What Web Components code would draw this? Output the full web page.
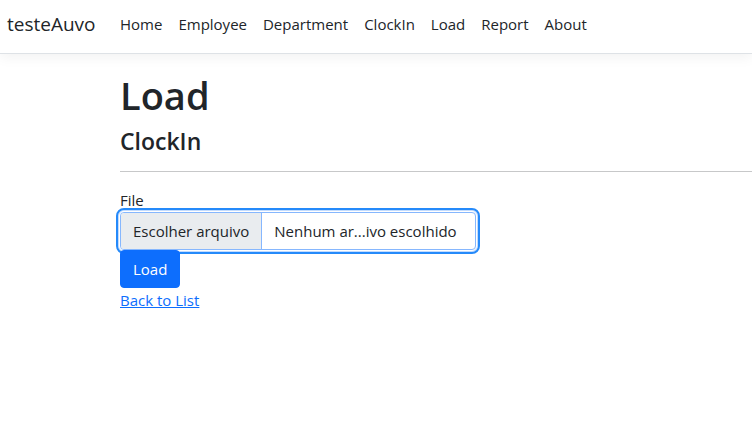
<!DOCTYPE html>
<html lang="en">
<head>
<meta charset="utf-8">
<meta name="viewport" content="width=device-width, initial-scale=1">
<title>Load - testeAuvo</title>
<style>
body { margin: 0; background: #fff; color: #212529; font: 15px/24px "Open Sans", "Noto Sans", sans-serif; overflow-x: hidden; }
</style>
</head>
<body>
<site-nav brand="testeAuvo">
  <nav-link>Home</nav-link>
  <nav-link>Employee</nav-link>
  <nav-link>Department</nav-link>
  <nav-link>ClockIn</nav-link>
  <nav-link>Load</nav-link>
  <nav-link>Report</nav-link>
  <nav-link>About</nav-link>
</site-nav>
<page-main>
  <page-heading><span slot="title">Load</span><span slot="subtitle">ClockIn</span></page-heading>
  <file-field button-text="Escolher arquivo" empty-text="Nenhum ar...ivo escolhido">File</file-field>
  <submit-button>Load</submit-button>
  <back-link>Back to List</back-link>
</page-main>
<script>
const define = (name, html) => customElements.define(name, class extends HTMLElement {
  constructor() {
    super();
    this.attachShadow({ mode: 'open' }).innerHTML = html;
  }
  connectedCallback() {
    this.shadowRoot.querySelectorAll('[data-attr]').forEach(el => {
      el.textContent = this.getAttribute(el.dataset.attr);
    });
  }
});

define('site-nav', `
  <style>
    :host { display: block; border-bottom: 1px solid #dee2e6; box-shadow: 0 4px 12px rgba(0,0,0,.05); }
    nav { display: flex; align-items: center; padding: 4px 8px 9px 7px; }
    .brand { width: 105px; flex: none; box-sizing: border-box; font-size: 19px; line-height: 30px; color: #212529; text-decoration: none; }
    .links { display: flex; }
  </style>
  <nav><a class="brand" href="#" data-attr="brand"></a><div class="links"><slot></slot></div></nav>`);

define('nav-link', `
  <style>
    :host { display: block; }
    a { display: block; padding: 8px; color: #212529; text-decoration: none; white-space: nowrap; }
  </style>
  <a href="#"><slot></slot></a>`);

define('page-main', `
  <style>
    :host { display: block; padding: 17px 0 16px 120px; }
    main { display: flex; flex-direction: column; align-items: flex-start; }
  </style>
  <main><slot></slot></main>`);

define('page-heading', `
  <style>
    :host { display: block; align-self: stretch; }
    h1, h4 { margin: 0 0 8px; font-weight: 600; }
    h1 { font-size: 38px; line-height: 48px; }
    h4 { font-size: 23px; line-height: 28px; }
    hr { margin: 16px 0; border: 0; border-top: 1px solid #c7c8c9; }
  </style>
  <h1><slot name="title"></slot></h1>
  <h4><slot name="subtitle"></slot></h4>
  <hr>`);

define('file-field', `
  <style>
    :host { display: block; width: 356px; max-width: calc(100% - 8px); }
    label { display: block; }
    .control { position: relative; display: flex; box-sizing: border-box; height: 38px; border: 1px solid #86b7fe; border-radius: 4px; outline: 2px solid #258afa; outline-offset: 2px; box-shadow: 0 0 0 1px #fff, 0 0 0 2px #c2dbfe; }
    .pick { padding: 6px 12px; background: #e9ecef; border-right: 1px solid #86b7fe; border-radius: 3px 0 0 3px; }
    .name { flex: 1; padding: 6px 12px; overflow: hidden; white-space: nowrap; }
    input { position: absolute; inset: 0; width: 100%; height: 100%; margin: 0; opacity: 0; cursor: pointer; }
  </style>
  <label for="file"><slot></slot></label>
  <div class="control">
    <span class="pick" data-attr="button-text"></span>
    <span class="name" data-attr="empty-text"></span>
    <input type="file" id="file">
  </div>`);

define('submit-button', `
  <style>
    :host { display: block; position: relative; }
    button { display: block; padding: 6px 12px; border: 1px solid #0d6efd; border-radius: 4px; background: #0d6efd; color: #fff; font: inherit; cursor: pointer; }
  </style>
  <button type="submit"><slot></slot></button>`);

define('back-link', `
  <style>
    :host { display: block; }
    a { color: #0d6efd; text-decoration: underline; }
  </style>
  <a href="#"><slot></slot></a>`);
</script>
</body>
</html>
